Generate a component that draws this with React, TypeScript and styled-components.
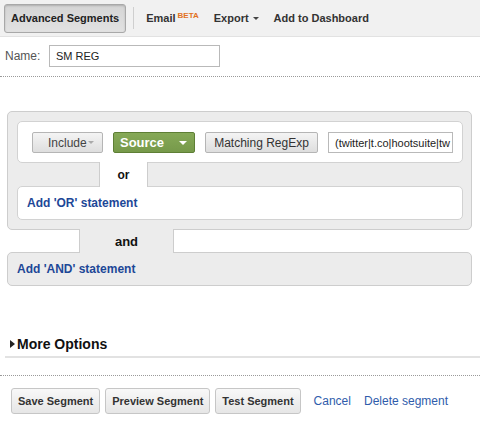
import styled, { createGlobalStyle } from "styled-components";

const GlobalStyle = createGlobalStyle`
  body {
    margin: 0;
    background: #fff;
    font-family: "Liberation Sans", Arial, sans-serif;
    color: #333;
  }
  * { box-sizing: border-box; }
`;

const Toolbar = styled.div`
  display: flex;
  align-items: center;
  height: 37px;
  padding: 0 4px;
  background: #f1f1f1;
  border-bottom: 1px solid #e2e2e2;
`;

const PressedButton = styled.div`
  display: flex;
  align-items: center;
  height: 29px;
  padding: 0 6px;
  border: 1px solid #a8a8a8;
  border-radius: 3px;
  background: linear-gradient(#d4d4d4, #e2e2e2);
  box-shadow: inset 0 1px 2px rgba(0, 0, 0, 0.18);
  font-size: 11px;
  font-weight: bold;
  color: #222;
`;

const Separator = styled.div`
  width: 1px;
  height: 22px;
  background: #cfcfcf;
  margin: 0 12px 0 7px;
`;

const ToolLink = styled.span`
  display: flex;
  align-items: center;
  font-size: 11px;
  font-weight: bold;
  color: #333;
  margin-right: 15px;

  sup {
    font-size: 8px;
    color: #e2721e;
    margin-left: 2px;
    position: relative;
    top: -3px;
  }
`;

const Caret = styled.span<{ $color?: string; $size?: number; $gap?: number }>`
  display: inline-block;
  width: 0;
  height: 0;
  margin-left: ${(p) => p.$gap ?? 4}px;
  border-left: ${(p) => p.$size ?? 3}px solid transparent;
  border-right: ${(p) => p.$size ?? 3}px solid transparent;
  border-top: ${(p) => p.$size ?? 3}px solid ${(p) => p.$color ?? "#444"};
`;

const NameRow = styled.div`
  display: flex;
  align-items: center;
  padding: 8px 5px 9px;
`;

const Label = styled.label`
  width: 44px;
  font-size: 12px;
  color: #555;
`;

const TextInput = styled.div<{ $width: number; $height?: number }>`
  width: ${(p) => p.$width}px;
  height: ${(p) => p.$height ?? 22}px;
  display: flex;
  align-items: center;
  padding: 0 6px;
  border: 1px solid #b9b9b9;
  background: #fff;
  font-size: 11px;
  color: #222;
  white-space: nowrap;
  overflow: hidden;
`;

const DottedRule = styled.div<{ $top?: number }>`
  margin-top: ${(p) => p.$top ?? 0}px;
  border-top: 1px dotted #9a9a9a;
`;

const Panel = styled.div<{ $top?: number }>`
  margin: ${(p) => p.$top ?? 0}px 8px 0 7px;
  background: #ececec;
  border: 1px solid #cdcdcd;
  border-radius: 5px;
  padding: 9px 8px 9px 9px;
`;

const WhiteBox = styled.div`
  background: #fff;
  border: 1px solid #d2d2d2;
  border-radius: 5px;
`;

const ConditionRow = styled.div`
  display: flex;
  align-items: center;
  gap: 10px;
  padding: 10px 9px 9px 14px;
`;

const GrayButton = styled.div<{ $width: number; $color?: string }>`
  width: ${(p) => p.$width}px;
  height: 21px;
  display: flex;
  align-items: center;
  justify-content: center;
  border: 1px solid #b5b5b5;
  border-radius: 2px;
  background: linear-gradient(#f4f4f4, #dedede);
  font-size: 12px;
  color: ${(p) => p.$color ?? "#444"};
`;

const GreenSelect = styled.div`
  width: 82px;
  height: 21px;
  display: flex;
  align-items: center;
  justify-content: space-between;
  padding: 0 7px 0 6px;
  border: 1px solid #5e7f35;
  border-radius: 2px;
  background: linear-gradient(#86a957, #76994a);
  font-size: 13px;
  font-weight: bold;
  color: #fff;
`;

const Connector = styled.div<{ $height: number; $inset?: boolean }>`
  display: flex;
  height: ${(p) => p.$height}px;
  margin: ${(p) => (p.$inset ? "-1px 8px -1px 7px" : "-1px 0")};
  position: relative;
  z-index: 1;
`;

const Side = styled.div<{ $width?: number; $edge: "left" | "right" }>`
  ${(p) => (p.$width ? `width: ${p.$width}px;` : "flex: 1;")}
  border-${(p) => (p.$edge === "left" ? "right" : "left")}: 1px solid #cdcdcd;
`;

const Tab = styled.div<{ $width: number; $bg: string; $size: number }>`
  width: ${(p) => p.$width}px;
  background: ${(p) => p.$bg};
  display: flex;
  align-items: center;
  justify-content: center;
  font-size: ${(p) => p.$size}px;
  font-weight: bold;
  color: #111;
`;

const StatementLink = styled.a`
  display: block;
  padding: 9px 9px;
  font-size: 12px;
  font-weight: bold;
  color: #1d4797;
  text-decoration: none;
`;

const AndPanel = styled.div`
  margin: 0 8px 0 7px;
  background: #ececec;
  border: 1px solid #cdcdcd;
  border-radius: 5px;
`;

const MoreOptions = styled.div`
  display: flex;
  align-items: center;
  gap: 2px;
  height: 26px;
  margin: 46px 0 0 5px;
  padding-left: 5px;
  border-bottom: 2px solid #e2e2e2;
  font-size: 14px;
  font-weight: bold;
  color: #111;
`;

const Actions = styled.div`
  display: flex;
  align-items: center;
  gap: 5px;
  padding: 12px 11px 0;
`;

const ActionButton = styled.div`
  height: 26px;
  display: flex;
  align-items: center;
  padding: 0 6px;
  border: 1px solid #c6c6c6;
  border-radius: 3px;
  background: linear-gradient(#f8f8f8, #e6e6e6);
  font-size: 11px;
  font-weight: bold;
  color: #333;
`;

const ActionLink = styled.a`
  font-size: 12px;
  color: #2f5cab;
  text-decoration: none;
  margin-left: 8px;
`;

export default function App() {
  return (
    <>
      <GlobalStyle />
      <Toolbar>
        <PressedButton>Advanced Segments</PressedButton>
        <Separator />
        <ToolLink>
          Email<sup>BETA</sup>
        </ToolLink>
        <ToolLink>
          Export
          <Caret />
        </ToolLink>
        <ToolLink>Add to Dashboard</ToolLink>
      </Toolbar>

      <NameRow>
        <Label>Name:</Label>
        <TextInput $width={171}>SM REG</TextInput>
      </NameRow>
      <DottedRule />

      <Panel $top={34}>
        <WhiteBox>
          <ConditionRow>
            <GrayButton $width={71}>
              &nbsp;&nbsp;Include
              <Caret $color="#aaa" $size={3} $gap={1} />
            </GrayButton>
            <GreenSelect>
              Source
              <Caret $color="#fff" $size={4} />
            </GreenSelect>
            <GrayButton $width={113} $color="#333">
              Matching RegExp
            </GrayButton>
            <TextInput $width={125} $height={21}>
              (twitter|t.co|hootsuite|tw
            </TextInput>
          </ConditionRow>
        </WhiteBox>
        <Connector $height={25}>
          <Side $edge="left" $width={83} />
          <Tab $width={47} $bg="#fff" $size={12}>
            or
          </Tab>
          <Side $edge="right" />
        </Connector>
        <WhiteBox>
          <StatementLink href="#">Add 'OR' statement</StatementLink>
        </WhiteBox>
      </Panel>
      <Connector $height={24} $inset>
        <Side $edge="left" $width={73} />
        <Tab $width={93} $bg="#ececec" $size={13}>
          and
        </Tab>
        <Side $edge="right" />
      </Connector>
      <AndPanel>
        <StatementLink href="#">Add 'AND' statement</StatementLink>
      </AndPanel>

      <MoreOptions>
        <svg width="5" height="8" viewBox="0 0 5 8">
          <path d="M0 0 L5 4 L0 8 Z" fill="#222" />
        </svg>
        More Options
      </MoreOptions>
      <DottedRule $top={17} />

      <Actions>
        <ActionButton>Save Segment</ActionButton>
        <ActionButton>Preview Segment</ActionButton>
        <ActionButton>Test Segment</ActionButton>
        <ActionLink href="#">Cancel</ActionLink>
        <ActionLink href="#">Delete segment</ActionLink>
      </Actions>
    </>
  );
}
